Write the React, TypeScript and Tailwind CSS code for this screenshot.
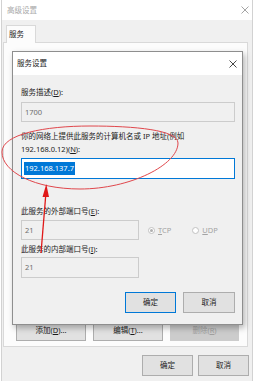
import React from "react";

function Btn({ children, w, primary, disabled }: { children: React.ReactNode; w: string; primary?: boolean; disabled?: boolean }) {
  return (
    <div
      className={`${w} h-[21px] flex items-center justify-center border ${
        primary ? "border-[#0078d7]" : disabled ? "border-[#cccccc]" : "border-[#adadad]"
      } ${disabled ? "bg-[#cccccc] text-[#a0a0a0]" : "bg-[#e1e1e1] text-[#1b1b1b]"}`}
    >
      {children}
    </div>
  );
}

function Radio({ checked, label, acc }: { checked?: boolean; label: string; acc: string }) {
  return (
    <div className="flex items-center gap-[3px] text-[#a3a3a3]">
      <span className="w-[7px] h-[7px] rounded-full border border-[#c2c2c2] bg-white flex items-center justify-center">
        {checked && <span className="w-[3px] h-[3px] rounded-full bg-[#b0b0b0]" />}
      </span>
      <span>
        <span className="underline">{acc}</span>
        {label}
      </span>
    </div>
  );
}

export default function App() {
  return (
    <div className="relative w-[255px] h-[381px] overflow-hidden bg-white font-['Noto_Sans','Noto_Sans_CJK_SC',sans-serif] text-[7.5px] leading-[13px] text-[#1b1b1b]">
      {/* outer window 高级设置 */}
      <div className="ml-[1px] w-[252px] h-full flex flex-col border-x border-[#d2d2d2]">
        <div className="h-[20px] bg-white flex items-center justify-between pl-[5px] pr-[3px] text-[#a8a8a8]">
          <span>高级设置</span>
          <svg width="8" height="8" viewBox="0 0 8 8">
            <path d="M0.5 0.5 L7.5 7.5 M7.5 0.5 L0.5 7.5" stroke="#9a9a9a" strokeWidth="0.9" />
          </svg>
        </div>
        <div className="flex-1 bg-[#f0f0f0] flex flex-col">
          {/* tabs */}
          <div className="mt-[5px] pl-[4px] flex">
            <div className="w-[30px] h-[18px] bg-[#fcfcfc] border-x border-t border-[#d9d9d9] flex items-center pl-[2px] -mb-px z-10">
              服务
            </div>
          </div>
          <div className="ml-[1px] w-[245px] h-[305px] bg-[#fcfcfc] border border-[#d9d9d9] flex flex-col justify-end pl-[12px] pb-[5px]">
            <div className="flex gap-[7px]">
              <Btn w="w-[70px]">
                添加(<span className="underline">D</span>)...
              </Btn>
              <Btn w="w-[70px]">
                编辑(<span className="underline">T</span>)...
              </Btn>
              <Btn w="w-[69px]" disabled>
                删除(<span className="underline">R</span>)
              </Btn>
            </div>
          </div>
          <div className="mt-[8px] flex justify-end gap-[5px] pr-[3px]">
            <Btn w="w-[51px]">确定</Btn>
            <Btn w="w-[51px]">取消</Btn>
          </div>
        </div>
      </div>

      {/* dialog 服务设置 */}
      <div className="absolute left-[12px] top-[51px] w-[231px] h-[274px] border border-[#8e8e8e] bg-[#f0f0f0] shadow-[2px_3px_6px_rgba(0,0,0,0.28)] flex flex-col">
        <div className="h-[23px] bg-white flex items-center justify-between pl-[4px] pr-[5px]">
          <span>服务设置</span>
          <svg width="8" height="8" viewBox="0 0 8 8">
            <path d="M0.5 0.5 L7.5 7.5 M7.5 0.5 L0.5 7.5" stroke="#333" strokeWidth="0.9" />
          </svg>
        </div>
        <div className="flex flex-col pl-[8px] pr-[7px]">
          <div className="mt-[11px]">
            服务描述(<span className="underline">D</span>):
          </div>
          <div className="mt-[3px] h-[20px] border border-[#cccccc] bg-[#f0f0f0] flex items-center pl-[3px] text-[#6d6d6d]">
            1700
          </div>
          <div className="mt-[8px]">
            你的网络上提供此服务的计算机名或 IP 地址(例如
            <br />
            192.168.0.12)(<span className="underline">N</span>):
          </div>
          <div className="mt-[2px] h-[21px] border border-[#0078d7] bg-white flex items-center pl-[2px]">
            <span className="bg-[#0078d7] text-white px-[1px]">192.168.137.7</span>
          </div>
          <div className="mt-[26px]">
            此服务的外部端口号(<span className="underline">E</span>):
          </div>
          <div className="mt-[2px] flex items-center">
            <div className="w-[118px] h-[20px] border border-[#cccccc] bg-[#f0f0f0] flex items-center pl-[3px] text-[#6d6d6d]">
              21
            </div>
            <div className="ml-[9px] flex items-center">
              <Radio checked acc="T" label="CP" />
            </div>
            <div className="ml-[21px] flex items-center">
              <Radio acc="U" label="DP" />
            </div>
          </div>
          <div className="mt-[3px]">
            此服务的内部端口号(<span className="underline">I</span>):
          </div>
          <div className="mt-[1px] w-[118px] h-[21px] border border-[#cccccc] bg-[#f0f0f0] flex items-center pl-[3px] text-[#6d6d6d]">
            21
          </div>
          <div className="mt-[14px] flex justify-end gap-[7px]">
            <Btn w="w-[51px]" primary>
              确定
            </Btn>
            <Btn w="w-[52px]">取消</Btn>
          </div>
        </div>
      </div>

      {/* red annotation */}
      <svg className="absolute left-0 top-0 pointer-events-none" width="255" height="381" viewBox="0 0 255 381">
        <path
          d="M2 152 C2 134 45 126 90 126 C135 126 178 130 178 143 C178 165 130 189 80 189 C35 189 2 172 2 152 Z"
          fill="none"
          stroke="#e0474c"
          strokeWidth="1"
        />
        <path d="M41 253 L46 192" stroke="#e01818" strokeWidth="1.3" />
        <path d="M46.3 184 L42.5 197 L49 197 Z" fill="#e01818" />
      </svg>
    </div>
  );
}
